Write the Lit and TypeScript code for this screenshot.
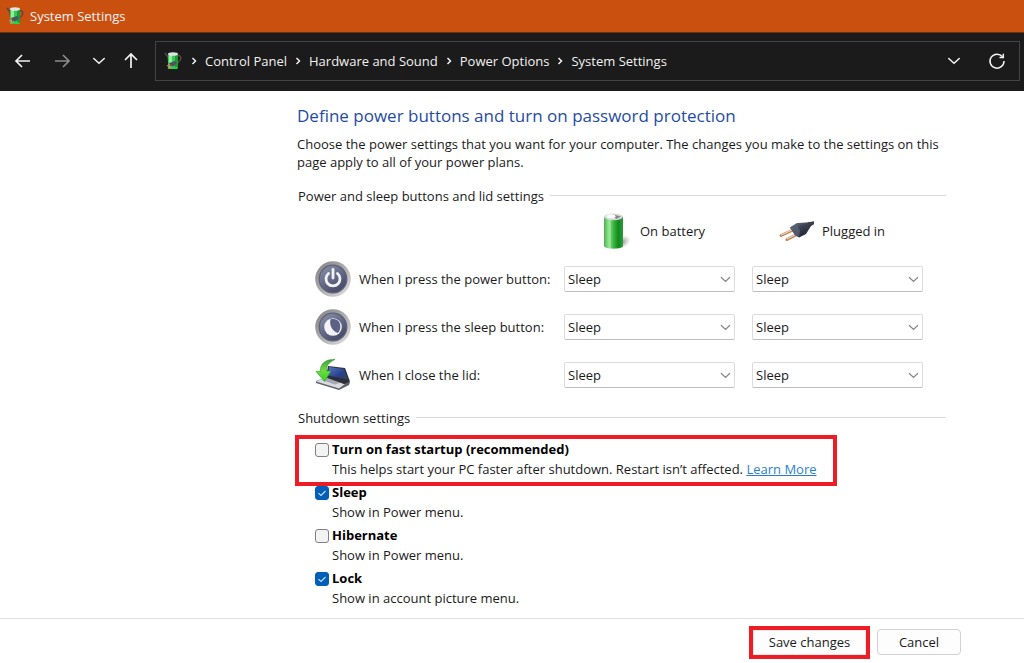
import { LitElement, html, css, svg, nothing } from "lit";
import { customElement, state } from "lit/decorators.js";

const batteryPlug = html`
  <svg class="app-icon" viewBox="0 0 18 20" width="18" height="20" aria-hidden="true">
    <path d="M1 2 L4 6 L5 12" fill="none" stroke="#4c4c4c" stroke-width="1.6" />
    <path d="M13.500 4.500 C18 4 17.500 9 14.500 11 L12 14" fill="none" stroke="#5a4a42" stroke-width="1.500" />
    <rect x="4" y="3" width="10" height="15" rx="1.500" fill="#3fc455" />
    <rect x="5" y="4" width="3" height="13" fill="#8af09a" />
    <rect x="11" y="4" width="3" height="13" fill="#1d9a38" />
    <ellipse cx="9" cy="3" rx="5" ry="1.800" fill="#dfe6df" />
    <path d="M5 12 L11 10 L13 12 L10 15 L6 16 Z" fill="#4a5560" />
    <path d="M3 15 L6 13.500 M4 17.500 L8 15" stroke="#c98a5a" stroke-width="1.300" />
    <path d="M7 17 H13" stroke="#19d94a" stroke-width="2" />
  </svg>
`;

const battery = html`
  <svg viewBox="0 0 42 36" width="42" height="36" aria-hidden="true">
    <defs>
      <linearGradient id="cell" x1="0" x2="1">
        <stop offset="0" stop-color="#4fae52" />
        <stop offset="0.25" stop-color="#8fe88f" />
        <stop offset="0.5" stop-color="#3cb440" />
        <stop offset="0.75" stop-color="#0f8a1c" />
        <stop offset="1" stop-color="#2f9a3a" />
      </linearGradient>
      <radialGradient id="shade">
        <stop offset="0" stop-color="#777" stop-opacity="0.8" />
        <stop offset="1" stop-color="#999" stop-opacity="0" />
      </radialGradient>
    </defs>
    <ellipse cx="31" cy="29" rx="9" ry="6" fill="url(#shade)" transform="rotate(-25 31 29)" />
    <path d="M13 4 V33 C13 36.500 32 36.500 32 33 V4 Z" fill="url(#cell)" />
    <path d="M19 6 V35" stroke="#d9ffd5" stroke-width="1" opacity="0.5" />
    <ellipse cx="22.500" cy="3.800" rx="9.500" ry="3.400" fill="#d5dad8" />
    <path d="M22 1.500 L30 3.500 L25 6 Z" fill="#85858f" />
    <ellipse cx="20" cy="3.300" rx="4.500" ry="2" fill="#fafafa" />
  </svg>
`;

const plug = html`
  <svg viewBox="0 0 36 36" width="36" height="36" aria-hidden="true">
    <defs>
      <linearGradient id="plug-body" x1="0" y1="0" x2="0.6" y2="1">
        <stop offset="0" stop-color="#7c8494" />
        <stop offset="0.45" stop-color="#3c4252" />
        <stop offset="1" stop-color="#1f2330" />
      </linearGradient>
    </defs>
    <path d="M2 22.500 L14 17" stroke="#b9835c" stroke-width="3" stroke-linecap="round" />
    <path d="M2 22 L13 17" stroke="#f6d3b0" stroke-width="1.200" />
    <path d="M8 26.500 L19 21" stroke="#b9835c" stroke-width="3" stroke-linecap="round" />
    <path d="M8 26 L18 21" stroke="#f6d3b0" stroke-width="1.200" />
    <path d="M11 14.500 L18 10 L27 9.500 L35 8.500 L35 11 L32 13 L27 21 L20 24.500 L16 22 Z" fill="url(#plug-body)" />
    <path d="M11 14.500 L18 10.500 L21 18 L20 24 L16 22 Z" fill="#596173" opacity="0.8" />
    <path d="M29 9.300 L35 8.500 L35 11 L31 13.500 Z" fill="#3a3f45" />
  </svg>
`;

const roundButton = (id: string, glyph: unknown) => html`
  <svg viewBox="0 0 36 36" width="36" height="36" aria-hidden="true">
    <defs>
      <linearGradient id=${id + "-rim"} x1="0" y1="0" x2="1" y2="1">
        <stop offset="0" stop-color="#808080" />
        <stop offset="0.5" stop-color="#adadad" />
        <stop offset="1" stop-color="#e2e2e2" />
      </linearGradient>
      <linearGradient id=${id + "-face"} x1="0" y1="0" x2="0.7" y2="1">
        <stop offset="0" stop-color="#9096ac" />
        <stop offset="0.5" stop-color="#686d8c" />
        <stop offset="1" stop-color="#454867" />
      </linearGradient>
    </defs>
    <circle cx="18" cy="18" r="17.800" fill=${`url(#${id}-rim)`} />
    <circle cx="18" cy="18" r="13.800" fill=${`url(#${id}-face)`} stroke="#5d6078" stroke-width="1.200" />
    ${glyph}
  </svg>
`;

const powerIcon = roundButton(
  "power",
  svg`<path d="M13.500 12.500 A7 7 0 1 0 22.500 12.500" fill="none" stroke="#f3f3f8" stroke-width="2.800" stroke-linecap="round" />
      <path d="M18 8.500 V17" stroke="#f3f3f8" stroke-width="2.800" stroke-linecap="round" />`
);

const sleepIcon = roundButton(
  "sleep",
  svg`<circle cx="18" cy="18" r="8.800" fill="#f3f3f8" />
      <path d="M15.500 10.300 C22 8.500 26 13 25.300 18.500 C25 21 24 23 22.800 24 C17 22 14 16 15.500 10.300 Z" fill="#5d6284" />`
);

const lidIcon = html`
  <svg viewBox="0 0 36 36" width="36" height="36" aria-hidden="true">
    <defs>
      <linearGradient id="lid" x1="0" y1="0" x2="1" y2="1">
        <stop offset="0" stop-color="#5577c4" />
        <stop offset="0.6" stop-color="#27408c" />
        <stop offset="1" stop-color="#3a4052" />
      </linearGradient>
      <linearGradient id="arrow" x1="0" y1="0" x2="0" y2="1">
        <stop offset="0" stop-color="#3f9f3a" />
        <stop offset="0.5" stop-color="#6fdc42" />
        <stop offset="1" stop-color="#35d020" />
      </linearGradient>
    </defs>
    <path d="M1 24 L12 20 L35 25 L34 28 L24 33 L1 26 Z" fill="#5c5f68" />
    <path d="M1 24.500 L10 20.500 L30 27 L24 31.500 Z" fill="#d9dbe0" />
    <path d="M7 23 L13 21 L26 25.500 L20 27.500 Z" fill="#a4a8b2" />
    <path d="M13 9 L30 11 L35 24.500 L29 27 L11 20.500 Z" fill="#2b2f3a" />
    <path d="M14 10 L29 12 L33 22.500 L13 18.500 Z" fill="url(#lid)" />
    <path d="M20 2.500 C10 2 5 7 5.500 14 L1 14.500 L9.500 24.500 L16 14 L11.500 14 C11 9 14 5 20 2.500 Z" fill="url(#arrow)" stroke="#2f9a2a" stroke-width="0.600" />
  </svg>
`;

const chevronDown = (size: number) => html`
  <svg class="chevron" viewBox="0 0 12 12" width=${size} height=${size} aria-hidden="true">
    <path d="M1.500 3.800 L6 8 L10.500 3.800" fill="none" stroke="currentColor" stroke-width="1.300" stroke-linecap="round" />
  </svg>
`;

const crumbArrow = html`
  <svg viewBox="0 0 6 8" width="6" height="8" aria-hidden="true">
    <path d="M1.500 1 L4.500 4 L1.500 7" fill="none" stroke="#f0f0f0" stroke-width="1.500" />
  </svg>
`;

@customElement("window-header")
class WindowHeader extends LitElement {
  static styles = css`
    :host { display: block; color: #f2f2f2; font-size: 13px; }
    svg { flex-shrink: 0; }
    .title { display: flex; align-items: center; gap: 6px; height: 32px; padding-left: 6px; background: #ca5010; border-bottom: 1px solid #6b3213; }
    .bar { display: flex; align-items: center; height: 58px; padding: 0 4px 2px 14px; background: #1b1b1b; box-sizing: border-box; }
    .nav { display: flex; align-items: center; gap: 21px; margin-right: 15px; }
    .tight { display: flex; gap: 16px; }
    button { display: flex; align-items: center; justify-content: center; padding: 0; border: 0; background: none; color: inherit; }
    button:disabled { color: #8c8c8c; }
    .address { flex: 1; min-width: 0; display: flex; align-items: center; height: 40px; padding: 0 13px 0 8px; border: 1px solid #434343; box-sizing: border-box; }
    .crumbs { flex: 1; min-width: 0; display: flex; align-items: center; margin: 0; padding: 0 0 0 9px; list-style: none; white-space: nowrap; }
    .crumbs li { display: flex; align-items: center; gap: 8px; padding-right: 8px; }
    .crumbs a { color: inherit; text-decoration: none; }
    .tools { display: flex; align-items: center; gap: 27px; }
  `;
  render() {
    const crumbs = ["Control Panel", "Hardware and Sound", "Power Options", "System Settings"];
    return html`
      <div class="title">${batteryPlug}<span>System Settings</span></div>
      <div class="bar">
        <div class="nav">
          <button aria-label="Back">
            <svg viewBox="0 0 18 18" width="18" height="18"><path d="M16 9 H2.500 M8 3 L2 9 L8 15" fill="none" stroke="currentColor" stroke-width="1.700" /></svg>
          </button>
          <button aria-label="Forward" disabled>
            <svg viewBox="0 0 18 18" width="18" height="18"><path d="M2 9 H15.500 M10 3 L16 9 L10 15" fill="none" stroke="currentColor" stroke-width="1.700" /></svg>
          </button>
          <div class="tight">
            <button aria-label="Recent locations">${chevronDown(14)}</button>
            <button aria-label="Up">
              <svg viewBox="0 0 18 18" width="18" height="18"><path d="M9 16 V2.500 M3 8 L9 2 L15 8" fill="none" stroke="currentColor" stroke-width="1.700" /></svg>
            </button>
          </div>
        </div>
        <div class="address">
          ${batteryPlug}
          <ol class="crumbs">${crumbs.map((c) => html`<li>${crumbArrow}<a href="#">${c}</a></li>`)}</ol>
          <div class="tools">
            <button aria-label="Previous locations">${chevronDown(14)}</button>
            <button aria-label="Refresh">
              <svg viewBox="0 0 18 18" width="18" height="18">
                <path d="M14.500 4.800 A7 7 0 1 0 16 9" fill="none" stroke="currentColor" stroke-width="1.500" />
                <path d="M15.300 1.800 V5.500 H11.500" fill="none" stroke="currentColor" stroke-width="1.500" />
              </svg>
            </button>
          </div>
        </div>
      </div>
    `;
  }
}

@customElement("app-root")
class AppRoot extends LitElement {
  static styles = css`
    :host { display: flex; flex-direction: column; min-height: 100vh; background: #fff; color: #1a1a1a; font: 13px/18px "Open Sans", "Noto Sans", sans-serif; }
    svg { flex-shrink: 0; }
    main { flex: 1; max-width: 649px; padding: 14px 16px 0 297px; }
    h1 { margin: 0; font-size: 17px; line-height: 22px; font-weight: 400; color: #1f4ba5; }
    .intro { margin: 8px 0 0; }
    h2 { display: flex; align-items: center; gap: 6px; margin: 0; padding-left: 1px; font-size: 13px; line-height: 18px; font-weight: 400; }
    h2::after { content: ""; flex: 1; height: 1px; margin-bottom: 2px; background: #d9d9d9; }
    .lid { margin-top: 16px; }
    .grid { display: grid; grid-template-columns: minmax(0, 1fr) 171px 171px; column-gap: 17px; grid-auto-rows: 48px; align-items: center; padding: 2px 23px 0 18px; }
    .head { display: flex; align-items: center; gap: 7px; padding-left: 27px; }
    .corner { grid-column: 1; }
    .rowlabel { display: flex; align-items: center; gap: 8px; white-space: nowrap; }
    .pick { display: grid; align-items: center; }
    select { grid-area: 1 / 1; width: 100%; height: 26px; padding: 0 24px 0 3px; border: 1px solid #dcdcdc; border-bottom-color: #bdbdbd; border-radius: 2px; background: #fff; color: inherit; font: inherit; appearance: none; }
    .pick .chevron { grid-area: 1 / 1; justify-self: end; margin-right: 4px; color: #858585; pointer-events: none; }
    .shutdown { margin-top: 10px; }
    .options { display: grid; gap: 3px; padding: 12px 0 8px 18px; }
    .option { position: relative; display: grid; grid-template-columns: 14px minmax(0, 1fr); column-gap: 3px; line-height: 20px; }
    .option label { font-weight: 700; color: #000; }
    .note { grid-column: 2; }
    .note a { color: #2a7fcb; }
    input { appearance: none; width: 14px; height: 14px; margin: 4px 0 0; border: 1px solid #808080; border-radius: 3px; background: #f3f3f3; }
    input:checked { border-color: #005fb8; background: #005fb8 url("data:image/svg+xml,%3Csvg xmlns='http://www.w3.org/2000/svg' viewBox='0 0 12 12'%3E%3Cpath d='M2.500 6.200 L5 8.500 L9.500 4' fill='none' stroke='%23cfe2f5' stroke-width='1.100'/%3E%3C/svg%3E") center / 12px 12px; }
    .marked::after { content: ""; position: absolute; inset: -4px 109px -7px -20px; border: 4px solid #ee1c25; pointer-events: none; z-index: 1; }
    footer { display: flex; justify-content: flex-end; align-items: center; gap: 7px; min-height: 45px; padding: 6px 63px 4px 16px; border-top: 1px solid #dedede; box-sizing: border-box; }
    footer button { width: 84px; height: 26px; padding: 0; border: 1px solid #d2d2d2; border-radius: 4px; background: #fdfdfd; color: inherit; font: inherit; }
    .frame { display: flex; border: 4px solid #ee1c25; }
    .frame button { width: 113px; height: 25px; border-color: #e8e8e8; border-radius: 0; }
  `;

  @state() private options = [
    { id: "fast", title: "Turn on fast startup (recommended)", note: "This helps start your PC faster after shutdown. Restart isn’t affected.", on: false, link: true },
    { id: "sleep", title: "Sleep", note: "Show in Power menu.", on: true, link: false },
    { id: "hibernate", title: "Hibernate", note: "Show in Power menu.", on: false, link: false },
    { id: "lock", title: "Lock", note: "Show in account picture menu.", on: true, link: false },
  ];

  private rows = [
    { id: "power", label: "When I press the power button:", icon: powerIcon },
    { id: "sleep", label: "When I press the sleep button:", icon: sleepIcon },
    { id: "lid", label: "When I close the lid:", icon: lidIcon },
  ];

  private picker(id: string, row: string, column: string) {
    return html`
      <div class="pick">
        <select aria-labelledby="${row} ${column}" id=${id}>
          <option>Do nothing</option>
          <option selected>Sleep</option>
          <option>Hibernate</option>
          <option>Shut down</option>
        </select>
        ${chevronDown(11)}
      </div>
    `;
  }

  private toggle(id: string, on: boolean) {
    this.options = this.options.map((o) => (o.id === id ? { ...o, on } : o));
  }

  render() {
    return html`
      <window-header></window-header>
      <main>
        <h1>Define power buttons and turn on password protection</h1>
        <p class="intro">Choose the power settings that you want for your computer. The changes you make to the settings on this page apply to all of your power plans.</p>
        <section class="lid">
          <h2>Power and sleep buttons and lid settings</h2>
          <div class="grid">
            <span class="corner"></span>
            <div class="head">${battery}<span id="on-battery">On battery</span></div>
            <div class="head">${plug}<span id="plugged-in">Plugged in</span></div>
            ${this.rows.map(
              (r) => html`
                <div class="rowlabel">${r.icon}<label id="${r.id}-label" for="${r.id}-battery">${r.label}</label></div>
                ${this.picker(r.id + "-battery", r.id + "-label", "on-battery")}
                ${this.picker(r.id + "-plugged", r.id + "-label", "plugged-in")}
              `
            )}
          </div>
        </section>
        <section class="shutdown">
          <h2>Shutdown settings</h2>
          <div class="options">
            ${this.options.map(
              (o) => html`
                <div class="option ${o.link ? "marked" : ""}">
                  <input type="checkbox" id="opt-${o.id}" .checked=${o.on} @change=${(e: Event) => this.toggle(o.id, (e.target as HTMLInputElement).checked)} />
                  <label for="opt-${o.id}">${o.title}</label>
                  <div class="note">${o.note}${o.link ? html` <a href="#">Learn More</a>` : nothing}</div>
                </div>
              `
            )}
          </div>
        </section>
      </main>
      <footer>
        <div class="frame"><button>Save changes</button></div>
        <button>Cancel</button>
      </footer>
    `;
  }
}
